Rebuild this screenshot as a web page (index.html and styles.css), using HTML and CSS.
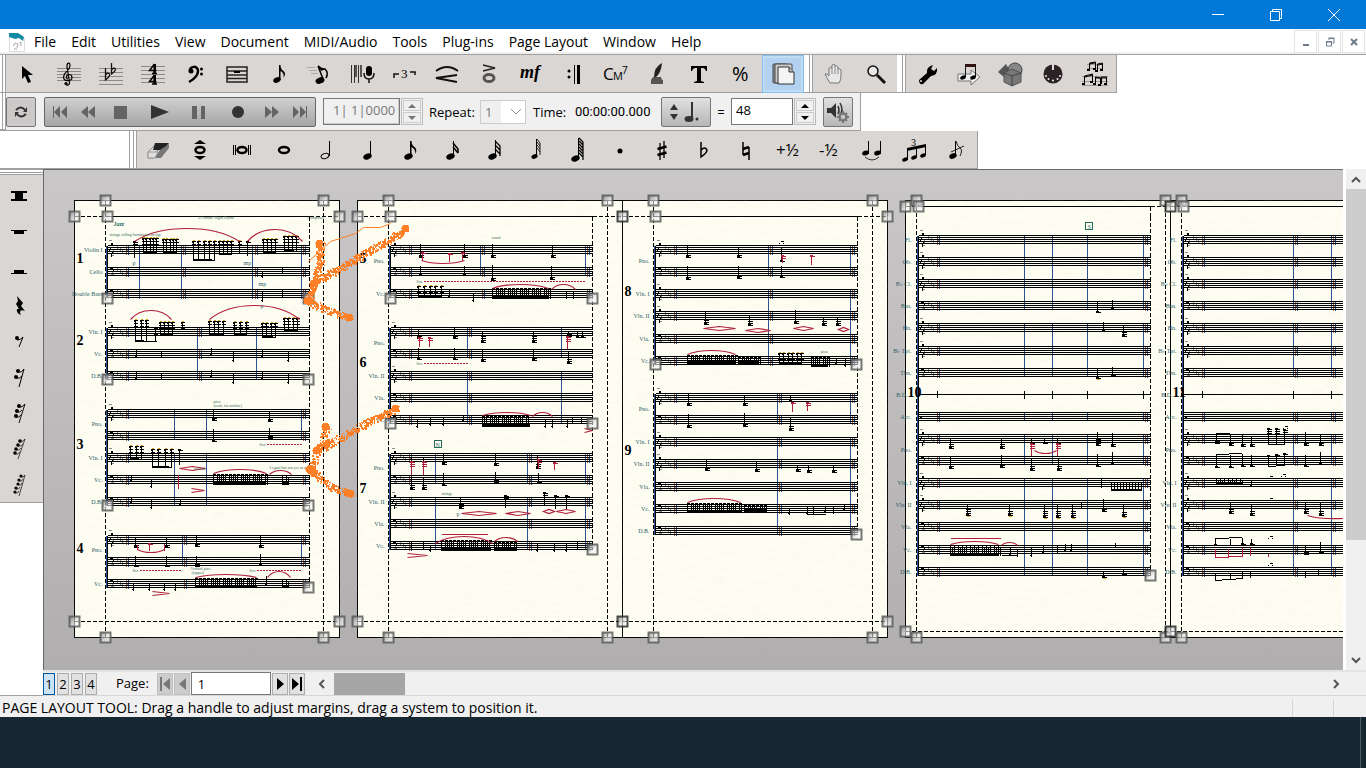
FILE: index.html
```html
<!DOCTYPE html>
<html lang="en">
<head>
  <meta charset="UTF-8">
  <title>Score - Page Layout</title>
  <link rel="stylesheet" href="styles.css">
</head>
<body>

<!-- shared note shapes -->
<svg class="sprite" aria-hidden="true">
  <symbol id="head" viewBox="0 0 8 6"><ellipse cx="4" cy="3" rx="3.9" ry="2.6" transform="rotate(-20 4 3)"/></symbol>
  <symbol id="treble" viewBox="0 0 12 24"><path fill="none" stroke="currentColor" stroke-width="1.200" d="M3.500 21C3 24 8 24 7.500 20L5 5C4.500 0 8.500 0 8 4C7.500 9 1.500 10 1.500 15C1.500 20 10 19.500 10 15.500C10 11.500 4 11.500 4.500 15.500Q5 17 6 17"/><circle cx="4" cy="21.500" r="1.600"/></symbol>
  <symbol id="staff" viewBox="0 0 24 13"><path stroke="#8d8b89" d="M0 .5h24M0 3.500h24M0 6.500h24M0 9.500h24M0 12.500h24"/></symbol>
</svg>

<header class="titlebar">
  <button class="win" aria-label="Minimize"><svg width="12" height="12"><path d="M0 5.500h12"/></svg></button>
  <button class="win" aria-label="Restore"><svg width="12" height="12"><path d="M.5 2.500h9v9h-9zM2.500 2.500v-2h9v9h-2"/></svg></button>
  <button class="win" aria-label="Close"><svg width="12" height="12"><path d="M0 0l12 12M12 0L0 12"/></svg></button>
</header>

<nav class="menubar">
  <svg class="doc-icon" width="16" height="20"><path fill="#fff" stroke="#ddd" d="M.5 2.500h11l4 4v13H.5z"/><path fill="#158ba6" d="M0 1h9l6 4-1 4-4-3-4 1-6-2z"/><path stroke="#aaa" fill="none" d="M4 14l2-3 3 1-1 4M10 11l2-1v4M5 17h3"/></svg>
  <button>File</button><button>Edit</button><button>Utilities</button><button>View</button><button>Document</button><button>MIDI/Audio</button><button>Tools</button><button>Plug-ins</button><button>Page Layout</button><button>Window</button><button>Help</button>
  <div class="mdi">
    <button aria-label="Minimize document"><svg width="10" height="10"><path d="M2 8h6" stroke-width="2"/></svg></button>
    <button aria-label="Restore document"><svg width="10" height="10"><path d="M1.500 5h5v4h-5zM1 4.500h6M4 3V1.500h5V6H7.500M3.500 1h6"/></svg></button>
    <button aria-label="Close document"><svg width="10" height="10"><path d="M2 2l6 6M8 2l-6 6" stroke-width="2"/></svg></button>
  </div>
</nav>

<div class="toolbar main-tools">
  <i class="grip"></i>
  <button aria-label="Selection"><svg viewBox="0 0 30 30"><path d="M10 7v13l3-3 3 7 3-1-3-7h5z"/></svg></button>
  <button aria-label="Staff"><svg viewBox="0 0 30 30"><use href="#staff" x="3" y="9" width="24" height="13"/><use href="#treble" x="8" y="3" width="12" height="24"/></svg></button>
  <button aria-label="Key signature"><svg viewBox="0 0 30 30"><path stroke="#8d8b89" d="M3 9.500h24M3 13.500h24M3 17.500h24M3 21.500h24M3 25.500h24"/><path fill="none" stroke="#111" stroke-width="1.300" d="M9.500 9v12q5-4 4-6-2-2-4 1M15.500 4v11q4-3 4-5-2-2-4 1"/></svg></button>
  <button aria-label="Time signature"><svg viewBox="0 0 30 30"><path stroke="#8d8b89" d="M3 7.500h24M3 11.500h24M3 15.500h24M3 19.500h24M3 23.500h24"/><path fill="none" stroke="#000" stroke-width="1.500" d="M16.500 5v9M16.500 5l-5 6.500h7M14 14.500h5M16.500 16v9M16.500 16l-5 6.500h7M14 25h5"/><path d="M15.500 5h2.500v9h-2.500zM15.500 16h2.500v9h-2.500z"/></svg></button>
  <button aria-label="Clef"><svg viewBox="0 0 30 30"><path fill="none" stroke="#000" stroke-width="2.500" d="M10 12C9 7 18 6 18 12q0 6-9 11"/><circle cx="11" cy="12" r="2.500"/><circle cx="21.500" cy="10" r="1.500"/><circle cx="21.500" cy="15" r="1.500"/></svg></button>
  <button aria-label="Measure"><svg viewBox="0 0 30 30"><path fill="none" stroke="#222" stroke-width="1.500" d="M5 8h20v15H5zM5 12h20M5 16h20M5 19.500h20"/><path d="M12 12h6v2h-6z"/></svg></button>
  <button aria-label="Simple entry"><svg viewBox="0 0 30 30"><use href="#head" x="9" y="18" width="8" height="6"/><path d="M15 6h1.500q0 4 3 6t0 7q1-5-3-7v9H15z"/></svg></button>
  <button aria-label="Speedy entry"><svg viewBox="0 0 30 30"><path stroke="#aaa" d="M1 8.500h8M3 11.500h8M5 14.500h7"/><use href="#head" x="9" y="18" width="10" height="7"/><path fill="none" stroke="#000" stroke-width="1.500" d="M12 7l5 13M12 7q3 3 7 3 4 4 1 9"/><path d="M12 6q3 4 8 4l-5 2z"/></svg></button>
  <button aria-label="HyperScribe"><svg viewBox="0 0 30 30"><path stroke="#333" d="M3.500 6v18M6.500 6v18M10.500 6v18" /><path stroke="#555" stroke-width="2" d="M8 6v12M13 6v12"/><rect x="18" y="7" width="6" height="10" rx="3"/><path fill="none" stroke="#111" stroke-width="1.500" d="M16 14q0 6 5 6t5-6M21 20v4"/></svg></button>
  <button aria-label="Tuplet"><svg viewBox="0 0 30 30"><path fill="none" stroke="#111" stroke-width="1.500" d="M4 19v-4h5M20 13h5v3"/><text x="11" y="19" class="ic-serif" font-size="13">3</text></svg></button>
  <button aria-label="Smart shape"><svg viewBox="0 0 30 30"><path fill="none" stroke="#111" stroke-width="1.800" d="M4 12q11-8 22 0M25 16L4 19l21 4"/></svg></button>
  <button aria-label="Articulation"><svg viewBox="0 0 30 30"><path fill="none" stroke="#222" stroke-width="1.500" d="M9 6l12 3-12 3"/><ellipse cx="15" cy="19" rx="5" ry="3.500" fill="none" stroke="#555" stroke-width="3"/></svg></button>
  <button aria-label="Expression"><svg viewBox="0 0 30 30"><text x="4" y="19" class="ic-serif ic-bi" font-size="18">mf</text></svg></button>
  <button aria-label="Repeat"><svg viewBox="0 0 30 30"><path d="M16 6h1v19h-1zM19 6h3v19h-3z"/><circle cx="11" cy="12" r="1.500"/><circle cx="11" cy="18" r="1.500"/></svg></button>
  <button aria-label="Chord"><svg viewBox="0 0 30 30"><text x="3" y="21" class="ic-sans" font-size="17">C</text><text x="13" y="21" class="ic-sans" font-size="11">M</text><text x="22" y="15" class="ic-sans" font-size="10">7</text></svg></button>
  <button aria-label="Lyrics"><svg viewBox="0 0 30 30"><path d="M20 4q-8 4-8 14h2q5-4 6-14z" fill="#222"/><path fill="#555" d="M11 18h8l1 3h1v4H9v-4z"/></svg></button>
  <button aria-label="Text"><svg viewBox="0 0 30 30"><path d="M7 7h16v5h-1q-1-3-3-3h-2v13l3 1v1H10v-1l3-1V9h-2q-2 0-3 3H7z"/></svg></button>
  <button aria-label="Resize"><svg viewBox="0 0 30 30"><text x="6" y="22" class="ic-sans" font-size="20">%</text></svg></button>
  <button class="selected" aria-label="Page layout"><svg viewBox="0 0 30 30"><rect x="5" y="5" width="14" height="19" rx="1" fill="#999" stroke="#444"/><rect x="7" y="5" width="17" height="19" rx="1" fill="#ccc" stroke="#444"/><path d="M10 8h11l5 5v12H10z" fill="#f4f4f4" stroke="#333"/><path d="M21 8v5h5" fill="#bbb" stroke="#333"/></svg></button>
  <i class="grip wide"></i>
  <button aria-label="Hand grabber"><svg viewBox="0 0 30 30"><path fill="#e8e8e8" stroke="#777" d="M11 24q-3-5-5-9 2-1 4 2V9q2-1 3 0V6q2-1 3 0v1q2-1 3 1v2q2-1 3 1v6q0 4-2 7z"/><path stroke="#888" d="M13 9v6M16 7v8M19 9v6"/></svg></button>
  <button aria-label="Zoom"><svg viewBox="0 0 30 30"><circle cx="12" cy="12" r="5" fill="#e6e6e6" stroke="#111" stroke-width="1.500"/><path stroke="#111" stroke-width="3" d="M16 16l8 8"/></svg></button>
  <i class="grip wide"></i>
  <button aria-label="Special tools"><svg viewBox="0 0 30 30"><path d="M7 21l8-7q-1-6 6-8l-2 4 3 2 3-3q1 7-6 8l-8 8q-4 1-4-4z"/><circle cx="9" cy="22" r="1" fill="#ddd"/></svg></button>
  <button aria-label="Note mover"><svg viewBox="0 0 30 30"><path d="M4 15h13v-4l9 7-9 8v-4H4z" fill="#eee" stroke="#777"/><path d="M11 5h11v3H11z" fill="#311"/><path stroke="#111" d="M11.500 6v12M21.500 6v12"/><use href="#head" x="6" y="16" width="6" height="5"/><use href="#head" x="16" y="16" width="6" height="5"/></svg></button>
  <button aria-label="Graphics"><svg viewBox="0 0 30 30"><path d="M2 13l8-8 5 9-6 5z" fill="#555"/><circle cx="19" cy="11" r="7" fill="#888" stroke="#444"/><path d="M16 10l9 4v9l-9 4-8-4v-9z" fill="#777" stroke="#555"/><path d="M8 14l8 3 9-3M16 17v10" stroke="#444" fill="none"/></svg></button>
  <button aria-label="MIDI"><svg viewBox="0 0 30 30"><circle cx="15" cy="15" r="9.500" fill="#2a2224"/><path d="M14 5h2v6h-2z" fill="#ddd"/><g fill="#eee"><circle cx="8" cy="17" r="1"/><circle cx="10.500" cy="20" r="1"/><circle cx="15" cy="21.500" r="1"/><circle cx="19.500" cy="20" r="1"/><circle cx="22" cy="17" r="1"/></g></svg></button>
  <button aria-label="Ossia"><svg viewBox="0 0 30 30"><path stroke="#999" d="M7 5.500h16M7 9.500h16M2 17.500h26M2 22.500h26M2 26.500h26"/><path fill="none" stroke="#000" d="M9.500 11V4l6-1v7M17.500 11V5l5-1v7M4.500 25v-8l8-2v8M15.500 25v-7l5 1v7M21.500 25v-7h5v7M9 5l6-1M18 6l5-1M5 18l8-2M15 19h12"/><path d="M7 10h3v2H7zM13 9h3v2h-3zM15 11h3v2h-3zM20 10h3v2h-3zM2 24h3v2H2zM10 22h3v2h-3zM13 24h3v2h-3zM18 25h3v2h-3zM24 24h3v2h-3z"/></svg></button>
  <i class="edge"></i>
</div>

<div class="toolbar playback">
  <i class="grip"></i>
  <button class="raised square" aria-label="Loop"><svg width="14" height="14"><path fill="none" stroke="#333" stroke-width="2" d="M2 5q5-5 9 0M12 9q-5 5-9 0"/><path fill="#333" d="M13 2v5H9zM1 12V7h4z"/></svg></button>
  <div class="transport">
    <button aria-label="Rewind to start"><svg width="16" height="14"><path d="M1 1h1v12H1zM8 1v12L2 7zM15 1v12L9 7z"/></svg></button>
    <button aria-label="Rewind"><svg width="16" height="14"><path d="M8 1v12L1 7zM15 1v12L8 7z"/></svg></button>
    <button class="mid" aria-label="Stop"><svg width="14" height="14"><path d="M0 1h13v13H0z"/></svg></button>
    <button class="dark wide" aria-label="Play"><svg width="20" height="14"><path d="M1 0l18 7-18 7z"/></svg></button>
    <button class="mid" aria-label="Pause"><svg width="14" height="14"><path d="M0 1h5v13H0zM9 1h4v13H9z"/></svg></button>
    <button class="dark wide" aria-label="Record"><svg width="14" height="14"><circle cx="7" cy="7" r="6"/></svg></button>
    <button aria-label="Fast forward"><svg width="16" height="14"><path d="M1 1l7 6-7 6zM8 1l7 6-7 6z"/></svg></button>
    <button aria-label="Forward to end"><svg width="16" height="14"><path d="M1 1l6 6-6 6zM8 1l6 6-6 6zM14 1h1v12h-1z"/></svg></button>
  </div>
  <div class="spin off">
    <input class="counter" type="text" value="1| 1|0000" aria-label="Position" disabled>
    <span class="spinner"><button aria-label="Position up" disabled><svg width="8" height="4"><path d="M0 4l4-4 4 4z"/></svg></button><button aria-label="Position down" disabled><svg width="8" height="4"><path d="M0 0l4 4 4-4z"/></svg></button></span>
  </div>
  <label class="repeat-label" for="repeat">Repeat:</label>
  <span class="pick"><select id="repeat" disabled><option>1</option></select><svg width="10" height="6"><path fill="none" stroke="#999" d="M0 0l5 5 5-5"/></svg></span>
  <span class="time-label">Time:</span>
  <span class="time">00:00:00.000</span>
  <button class="raised tempo" aria-label="Beat unit"><svg width="34" height="24"><path fill="#333" d="M1 10l4-6 4 6zM1 14l4 6 4-6zM22 2h2v18h-2z"/><g fill="#333"><ellipse cx="20" cy="19" rx="4.500" ry="3"/><circle cx="28" cy="19" r="1.500"/></g></svg></button>
  <label class="equals" for="bpm">=</label>
  <div class="spin">
    <input id="bpm" class="bpm" type="text" value="48">
    <span class="spinner"><button aria-label="Tempo up"><svg width="8" height="4"><path d="M0 4l4-4 4 4z"/></svg></button><button aria-label="Tempo down"><svg width="8" height="4"><path d="M0 0l4 4 4-4z"/></svg></button></span>
  </div>
  <button class="raised square speaker" aria-label="Playback settings"><svg width="24" height="24"><path fill="#333" d="M1 8h4l5-5v15l-5-5H1z"/><path fill="none" stroke="#333" stroke-width="1.500" d="M12 6q2 4 0 8M14 3q4 7 0 12"/><circle cx="17" cy="17" r="3.500" fill="none" stroke="#777" stroke-width="2.500"/><path stroke="#777" stroke-width="2" d="M17 11v2M17 21v2M11 17h2M21 17h2M13 13l1 1M20 20l1 1M21 13l-1 1M14 20l-1 1"/></svg></button>
  <i class="edge"></i>
</div>

<div class="toolbar entry">
  <div class="entry-blank"></div>
  <i class="grip wide"></i>
  <button aria-label="Eraser"><svg viewBox="0 0 30 30"><path fill="#ddd" stroke="#888" d="M5 17l7-7h5l-6 13H5z"/><path fill="#222" d="M12 8h14l-6 7H10z"/><path fill="#777" d="M26 9v4l-8 10h-7l6-8z"/><path fill="#ddd" stroke="#999" d="M5 17h10l-3 6H5z"/></svg></button>
  <button aria-label="Repitch"><svg viewBox="0 0 30 30"><path d="M9 9l6-4 6 4zM9 21l6 4 6-4z"/><ellipse cx="15" cy="15" rx="4.500" ry="3" fill="none" stroke="#000" stroke-width="2.500"/></svg></button>
  <button aria-label="Double whole"><svg viewBox="0 0 30 30"><path d="M6 10h1v10H6zM8 10h1v10H8zM21 10h1v10h-1zM23 10h1v10h-1z"/><ellipse cx="15" cy="15" rx="4.500" ry="3" fill="none" stroke="#000" stroke-width="2.500"/></svg></button>
  <button aria-label="Whole"><svg viewBox="0 0 30 30"><ellipse cx="15" cy="15" rx="5" ry="3" fill="none" stroke="#000" stroke-width="2.500"/></svg></button>
  <button aria-label="Half"><svg viewBox="0 0 30 30"><ellipse cx="14" cy="21" rx="4" ry="2.500" fill="none" stroke="#000" transform="rotate(-20 14 21)"/><path d="M18 6h1v15h-1z"/></svg></button>
  <button aria-label="Quarter"><svg viewBox="0 0 30 30"><use href="#head" x="10" y="18" width="9" height="7"/><path d="M17 6h1v15h-1z"/></svg></button>
  <button aria-label="Eighth"><svg viewBox="0 0 30 30"><use href="#head" x="9" y="18" width="9" height="7"/><path d="M15 6h1.500q0 4 3 6t1 7q0-5-4-7v9H15z"/></svg></button>
  <button aria-label="16th"><svg viewBox="0 0 30 30"><use href="#head" x="9" y="18" width="9" height="7"/><path d="M16 6h1v15h-1z"/><path fill="none" stroke="#000" stroke-width="1.500" d="M16 8l5 6v4M16 12l5 6"/></svg></button>
  <button aria-label="32nd"><svg viewBox="0 0 30 30"><use href="#head" x="9" y="18" width="9" height="7"/><path d="M16 5h1v16h-1z"/><path fill="none" stroke="#000" stroke-width="1.300" d="M16 6l5 5v10M16 10l5 5M16 14l5 5"/></svg></button>
  <button aria-label="64th"><svg viewBox="0 0 30 30"><use href="#head" x="10" y="19" width="7" height="5"/><path d="M15 4h1v17h-1z"/><path fill="none" stroke="#222" d="M16 4l3 4v12M16 7l3 4M16 10l3 4M16 13l3 4"/></svg></button>
  <button aria-label="128th"><svg viewBox="0 0 30 30"><use href="#head" x="8" y="20" width="9" height="7"/><path d="M15 3h1v20h-1z"/><path fill="none" stroke="#000" stroke-width="1.200" d="M16 3l4 4v18M16 6l4 4M16 9l4 4M16 12l4 4M16 15l4 4M16 18l4 4"/></svg></button>
  <button aria-label="Dot"><svg viewBox="0 0 30 30"><circle cx="15" cy="16" r="2.500"/></svg></button>
  <button aria-label="Sharp"><svg viewBox="0 0 30 30"><path stroke="#000" stroke-width="1.300" d="M13 8v17M17 6v17"/><path stroke="#000" stroke-width="2.500" d="M10.500 14l9-2.500M10.500 20l9-2.500"/></svg></button>
  <button aria-label="Flat"><svg viewBox="0 0 30 30"><path fill="none" stroke="#000" stroke-width="1.500" d="M12 7v15q6-4 6-7-2-4-6 0"/></svg></button>
  <button aria-label="Natural"><svg viewBox="0 0 30 30"><path fill="none" stroke="#000" stroke-width="1.500" d="M12 7v13M18 12v13"/><path stroke="#000" stroke-width="2.500" d="M12 14l6-2M12 20l6-2"/></svg></button>
  <button aria-label="Half step up"><svg viewBox="0 0 30 30"><text x="3" y="21" class="ic-sans" font-size="17">+½</text></svg></button>
  <button aria-label="Half step down"><svg viewBox="0 0 30 30"><text x="4" y="21" class="ic-sans" font-size="17">-½</text></svg></button>
  <button aria-label="Tie"><svg viewBox="0 0 30 30"><path d="M11 6h1v13h-1zM23 6h1v13h-1z"/><use href="#head" x="5" y="15" width="7" height="6"/><use href="#head" x="17" y="15" width="7" height="6"/><path fill="none" stroke="#333" d="M8 22q7 6 14 0"/></svg></button>
  <button aria-label="Tuplet entry"><svg viewBox="0 0 30 30"><path d="M8 13l19-4v3L8 16z"/><path stroke="#000" d="M8.500 13v12M17.500 12v10M26.500 10v10"/><use href="#head" x="3" y="22" width="6" height="5"/><use href="#head" x="12" y="20" width="6" height="5"/><use href="#head" x="21" y="18" width="6" height="5"/><text x="12" y="11" class="ic-serif" font-size="10">3</text></svg></button>
  <button aria-label="Grace note"><svg viewBox="0 0 30 30"><use href="#head" x="8" y="18" width="8" height="6"/><path d="M14 6h1v15h-1z"/><path fill="none" stroke="#222" d="M15 6q1 5 4 7t0 8M10 17l13-6"/></svg></button>
  <i class="edge"></i>
</div>

<main class="work">
  <aside class="rests">
    <i class="grip-h"></i>
    <div class="rest-list">
      <button aria-label="Double whole rest"><svg viewBox="0 0 30 30"><path d="M7 9h16v2H7zM7 17h16v2H7zM11 10h8v8h-8z"/></svg></button>
      <button aria-label="Whole rest"><svg viewBox="0 0 30 30"><path d="M7 12h16v1H7zM10 12h10v4H10z"/></svg></button>
      <button aria-label="Half rest"><svg viewBox="0 0 30 30"><path d="M7 19h16v1H7zM10 16h10v4H10z"/></svg></button>
      <button aria-label="Quarter rest"><svg viewBox="0 0 30 30"><path d="M13 6l6 7-2 3 4 5q-5-2-5 2l1 2q-5-2-4-6h2l-3-5 2-3z"/></svg></button>
      <button aria-label="Eighth rest"><svg viewBox="0 0 30 30"><circle cx="13" cy="12" r="2"/><path fill="none" stroke="#000" d="M13 14q4 0 6-3l-4 10"/></svg></button>
      <button aria-label="16th rest"><svg viewBox="0 0 30 30"><circle cx="14" cy="9" r="2"/><circle cx="12" cy="15" r="2"/><path fill="none" stroke="#000" d="M14 10q4 1 6-3l-5 18M12 16q4 1 6-2"/></svg></button>
      <button aria-label="32nd rest"><svg viewBox="0 0 30 30"><circle cx="15" cy="8" r="2"/><circle cx="13" cy="13" r="2"/><circle cx="12" cy="18" r="2"/><path fill="none" stroke="#111" d="M15 9q3 1 6-3l-6 19M13 14q3 1 5-2M12 19q3 1 5-2"/></svg></button>
      <button aria-label="64th rest"><svg viewBox="0 0 30 30"><circle cx="16" cy="7" r="1.800"/><circle cx="14" cy="11" r="1.800"/><circle cx="12" cy="15" r="1.800"/><circle cx="11" cy="19" r="1.800"/><path fill="none" stroke="#222" stroke-width=".8" d="M15 8q3 1 6-3l-7 20M14 12q3 1 5-2M12 16q3 1 5-2M11 20q3 1 5-2"/></svg></button>
      <button aria-label="128th rest"><svg viewBox="0 0 30 30"><circle cx="17" cy="6" r="1.600"/><circle cx="15" cy="10" r="1.600"/><circle cx="14" cy="14" r="1.600"/><circle cx="12" cy="18" r="1.600"/><circle cx="11" cy="22" r="1.600"/><path fill="none" stroke="#222" stroke-width=".8" d="M17 7q2 1 4-2l-6 21M15 11q3 1 4-2M14 15q3 1 4-2M12 19q3 1 4-2M11 23q3 1 4-2"/></svg></button>
    </div>
  </aside>

  <section class="document">
    <div class="view">
      <div class="canvas" id="canvas"></div>
      <div class="vscroll">
        <button aria-label="Scroll up"><svg width="10" height="7"><path d="M1 6l4-4 4 4"/></svg></button>
        <span class="vthumb"></span>
        <button class="last" aria-label="Scroll down"><svg width="10" height="7"><path d="M1 1l4 4 4-4"/></svg></button>
      </div>
    </div>
    <div class="bottom">
      <button class="layer on">1</button><button class="layer">2</button><button class="layer">3</button><button class="layer">4</button>
      <label for="page">Page:</label>
      <button class="nav off" aria-label="First page"><svg width="12" height="14"><path d="M1 0h2v14H1zM11 1v12L4 7z"/></svg></button>
      <button class="nav off" aria-label="Previous page"><svg width="12" height="14"><path d="M10 1v12L3 7z"/></svg></button>
      <input id="page" type="text" value="1">
      <button class="nav" aria-label="Next page"><svg width="12" height="14"><path d="M3 1v12l7-6z"/></svg></button>
      <button class="nav" aria-label="Last page"><svg width="12" height="14"><path d="M1 1v12l7-6zM9 0h2v14H9z"/></svg></button>
      <div class="hscroll">
        <button aria-label="Scroll left"><svg width="7" height="10"><path d="M6 1L2 5l4 4"/></svg></button>
        <span class="hthumb"></span>
        <button class="last" aria-label="Scroll right"><svg width="7" height="10"><path d="M1 1l4 4-4 4"/></svg></button>
      </div>
    </div>
  </section>
</main>

<footer class="status"><span>PAGE LAYOUT TOOL: Drag a handle to adjust margins, drag a system to position it.</span><i></i><i></i></footer>
<div class="taskbar"></div>

<script src="score.js"></script>
</body>
</html>
```

FILE: styles.css
```css
* {
  box-sizing: border-box;
}
body {
  margin: 0;
  height: 100vh;
  display: flex;
  flex-direction: column;
  overflow: hidden;
  background: #fff;
  color: #000;
  font: 14px/20px "Open Sans", "Noto Sans", sans-serif;
}
button, input, select {
  font: inherit;
  color: inherit;
  margin: 0;
  padding: 0;
  border: 0;
  border-radius: 0;
  background: none;
}
button {
  display: flex;
  align-items: center;
  justify-content: center;
}
.sprite {
  position: absolute;
  width: 0;
  height: 0;
}

/* window frame */
.titlebar {
  flex: none;
  height: 29px;
  display: flex;
  justify-content: flex-end;
  padding-right: 3px;
  background: #0078d7;
}
.win {
  width: 58px;
}
.win svg {
  fill: none;
  stroke: #fff;
}
.menubar {
  flex: none;
  height: 26px;
  display: flex;
  align-items: center;
  gap: 15px;
  padding-left: 9px;
  border-bottom: 1px solid #a0a0a0;
  box-shadow: inset 0 -2px #f0f0f0;
}
.doc-icon {
  margin-right: -6px;
}
.mdi {
  display: flex;
  gap: 1px;
  margin-left: auto;
  padding-right: 1px;
  align-self: flex-start;
  padding-top: 1px;
}
.mdi button {
  width: 23px;
  height: 23px;
  border: 1px solid #e3e3e3;
}
.mdi svg {
  fill: none;
  stroke: #6d7b8a;
}

/* toolbars */
.toolbar {
  flex: none;
  height: 38px;
  display: flex;
  align-items: stretch;
}
.grip {
  width: 6px;
  flex: none;
  background: #fff;
  border-right: 1px solid #a0a0a0;
  box-shadow: inset -2px 0 #fff, inset -3px 0 #a0a0a0;
}
.grip.wide {
  width: 9px;
}
.edge {
  width: 1px;
  background: #a0a0a0;
}
.main-tools > button, .entry > button {
  width: 42px;
  flex: none;
  background: #d9d6d3;
}
.main-tools > *, .entry > *, .playback > .grip {
  border-bottom: 1px solid #a0a0a0;
}
.main-tools svg, .entry svg {
  width: 30px;
  height: 30px;
}
.main-tools > .selected {
  background: #b3d2f2;
  border: 1px solid #84c1f0;
  box-shadow: inset 0 0 0 2px #c0dcf3;
}
.ic-serif {
  font-family: "Liberation Serif", serif;
}
.ic-bi {
  font-weight: bold;
  font-style: italic;
}
.ic-sans {
  font-family: "Open Sans", sans-serif;
}

.playback {
  align-self: flex-start;
  align-items: center;
  background: #f0f0f0;
  border-bottom: 1px solid #a0a0a0;
  font-size: 13px;
}
.playback .grip, .playback .edge {
  align-self: stretch;
}
.raised {
  height: 30px;
  border: 1px solid #777;
  border-radius: 2px;
  background: linear-gradient(#e0e0e0, #b6b6b6);
}
.square {
  width: 30px;
  background: #ccc9c8;
}
.transport {
  display: flex;
  justify-content: center;
  width: 272px;
  height: 30px;
  margin: 0 7px 0 8px;
  border: 1px solid #666;
  border-radius: 2px;
  background: linear-gradient(#cfcfcf, #a5a5a5);
}
.transport button {
  width: 28px;
}
.transport .mid {
  width: 38px;
}
.transport .wide {
  width: 40px;
}
.transport svg {
  fill: #646464;
}
.transport .dark svg {
  fill: #333;
}
.spin {
  display: flex;
  height: 27px;
  gap: 1px;
}
.spin input {
  border: 1px solid #777;
  background: #fff;
  padding: 0 4px 3px;
}
.spin .counter {
  width: 77px;
  background: #f0f0f0;
  padding-left: 9px;
  color: #777;
  box-shadow: inset -1px -1px #ccc;
}
.spin .bpm {
  width: 62px;
}
.spinner {
  display: flex;
  flex-direction: column;
  width: 22px;
  padding: 1px;
  gap: 1px;
  border: 1px solid #bbb;
}
.spinner button {
  flex: 1;
  border: 1px solid #ccc;
}
.off .spinner svg {
  fill: #777;
}
.repeat-label {
  margin-left: 6px;
  width: 51px;
}
.pick {
  position: relative;
  display: flex;
}
.pick select {
  appearance: none;
  width: 46px;
  height: 24px;
  padding-left: 4px;
  border: 1px solid #ccc;
  background: linear-gradient(90deg, #f0f0f0 20px, #fff 20px);
  color: #777;
  opacity: 1;
}
.pick svg {
  position: absolute;
  right: 5px;
  top: 9px;
}
.time-label {
  width: 42px;
  margin-left: 7px;
}
.time {
  width: 78px;
  font-family: Roboto, sans-serif;
}
.tempo {
  width: 50px;
  margin-left: 8px;
}
.equals {
  width: 20px;
  text-align: center;
}
.speaker {
  margin: 0 7px;
  background: linear-gradient(#e0e0e0, #b6b6b6);
}
.entry-blank {
  width: 130px;
  background: #fff;
  border-right: 1px solid #a0a0a0;
}
.entry .grip.wide {
  width: 7px;
}

/* score window */
.work {
  flex: 1;
  min-height: 0;
  display: flex;
}
.rests {
  width: 43px;
  flex: none;
  border-bottom: 1px solid #a0a0a0;
}
.grip-h {
  display: block;
  height: 6px;
  border-top: 1px solid #a0a0a0;
  border-bottom: 1px solid #a0a0a0;
  box-shadow: inset 0 2px #fff, inset 0 3px #a0a0a0;
}
.rest-list {
  display: flex;
  flex-direction: column;
  align-items: center;
  gap: 1px;
  padding: 4px 5px 0 0;
  background: #d9d6d3;
  border-bottom: 1px solid #a0a0a0;
}
.rest-list button {
  height: 35px;
}
.rest-list svg {
  width: 30px;
  height: 30px;
}
.document {
  flex: 1;
  min-width: 0;
  display: flex;
  flex-direction: column;
  background: #f0f0f0;
}
.view {
  flex: 1;
  min-height: 0;
  display: flex;
}
.canvas {
  flex: 1;
  min-width: 0;
  overflow: hidden;
  border-top: 1px solid #696969;
  border-left: 1px solid #696969;
  background: linear-gradient(#c9c7c8, #b0aeaf);
}
.canvas svg {
  display: block;
}
.vscroll, .hscroll {
  display: flex;
  background: #f0f0f0;
}
.vscroll {
  flex-direction: column;
  width: 23px;
  border-left: 3px solid #fff;
}
.vscroll button {
  height: 20px;
}
.vscroll .last, .hscroll .last {
  margin-top: auto;
}
.vscroll svg, .hscroll svg {
  fill: none;
  stroke: #555;
  stroke-width: 2px;
}
.vthumb {
  height: 70%;
  background: #cdcdcd;
}
.bottom {
  flex: none;
  height: 26px;
  display: flex;
  align-items: center;
  border-top: 2px solid #e3e3e3;
  border-bottom: 1px solid #d7d7d7;
  font-size: 13px;
}
.layer {
  width: 12px;
  height: 22px;
  margin-right: 2px;
  background: #e1e1e1;
  border: 1px solid #adadad;
}
.layer.on {
  background: #cce4f7;
  border-color: #005499;
}
.bottom label {
  margin: 0 8px 2px 17px;
}
.nav {
  width: 16px;
  height: 22px;
  margin-right: 1px;
  background: #e1e1e1;
  border: 1px solid #adadad;
}
.nav.off {
  background: #ccc;
  border-color: #bfbfbf;
}
.nav.off svg {
  fill: #777;
}
.bottom input {
  width: 80px;
  height: 23px;
  margin-right: 1px;
  padding-left: 6px;
  background: #fff;
  border: 1px solid #777;
}
.hscroll {
  flex: 1;
  height: 22px;
  margin: 0 18px 0 4px;
}
.hscroll button {
  width: 24px;
}
.hscroll .last {
  margin: 0 0 0 auto;
}
.hthumb {
  width: 71px;
  background: #a6a6a6;
}
.status {
  flex: none;
  height: 21px;
  display: flex;
  padding: 3px 0 0 2px;
  line-height: 18px;
  background: #f0f0f0;
}
.status span {
  flex: 1;
}
.status i {
  width: 41px;
  border-left: 1px solid #d7d7d7;
}
.status i:last-child {
  width: 33px;
}
.taskbar {
  flex: none;
  height: 51px;
  background: #172832;
  border-right: 1px solid #101c24;
  box-shadow: inset -4px 0 #172832, inset -5px 0 #4b5a63;
}

/* score drawing */
.paper {
  fill: #fefef3;
  stroke: #000;
}
.grain {
  opacity: .12;
}
.crisp {
  shape-rendering: crispEdges;
  fill: none;
}
.ink { stroke: #000; }
.bar { stroke: #2b5590; }
.red { stroke: #b01f3c; }
.soft { stroke: #8b8d88; }
.gold { stroke: #d9a41c; }
.rust { stroke: #a5614f; }
.teal { stroke: #27695a; }
.margin {
  stroke: #000;
  stroke-dasharray: 4 2;
}
.slur {
  fill: none;
  stroke: #b01f3c;
  stroke-width: 1.2;
}
.handle {
  stroke: #555;
  stroke-opacity: .8;
  stroke-width: 2px;
}
.handle.dark {
  stroke: #222;
}
.tiny {
  font: 6px "Liberation Serif", serif;
  fill: #2f5f68;
}
.micro {
  font: 4px "Liberation Serif", serif;
  fill: #3d6a5c;
}
.title {
  font: italic bold 6px "Liberation Serif", serif;
  fill: #1b6a60;
}
.number {
  font: bold 14px "Liberation Serif", serif;
}
.marker {
  fill: #ff7f27;
  shape-rendering: crispEdges;
}
.marker-line {
  fill: none;
  stroke: #ff7f27;
}
```

FILE: score.js
```js
const layers = { soft: '', bar: '', gold: '', rust: '', ink: '', red: '', teal: '' };
let margins = '', slurs = '', texts = '', handles = '', pages = '';

let seed = 7;
function rnd() {
  seed = (seed * 16807) % 2147483647;
  return seed / 2147483647;
}

const h = (l, x, y, x2) => { layers[l] += `M${x} ${y}H${x2}`; };
const v = (l, x, y, y2) => { layers[l] += `M${x} ${y}V${y2}`; };
const dash = (x, y, x2, y2) => { margins += `M${x} ${y}L${x2} ${y2}`; };

function text(x, y, str, cls = 'tiny', anchor = 'start') {
  texts += `<text x="${x}" y="${y}" class="${cls}" text-anchor="${anchor}">${str}</text>`;
}

function page(x1, x2, m1, m2, s1, s2, top, bottom) {
  pages += `<rect class="paper" x="${x1}" y="200" width="${x2 - x1}" height="437"/>
    <rect class="grain" x="${x1}" y="200" width="${x2 - x1}" height="437" filter="url(#grain)"/>`;
  dash(m1, 200, m1, 637);
  dash(m2, 200, m2, 637);
  dash(x1, top, s1, top);
  dash(s2, top, x2, top);
  dash(x1, bottom, x2, bottom);
  h('ink', s1, top, s2);
}

function handle(x, y, dark) {
  handles += `<rect class="handle${dark ? ' dark' : ''}" x="${x - 5}" y="${y - 5}" width="10" height="10" fill="url(#knob)"/>`;
}

// clef: t treble, b bass, p percussion
function staff(x, x2, y, clef, times = []) {
  for (let i = 0; i < 5; i++) h('ink', x, y + i * 2, x2);
  if (clef === 't') {
    layers.ink += `M${x + 4} ${y - 3}v3M${x + 5} ${y - 3}v2M${x + 3} ${y + 1}v2M${x + 2} ${y + 3}v3M${x + 5} ${y + 5}v2M${x + 4} ${y + 8}v3`;
    layers.soft += `M${x + 1} ${y - 5}h3M${x + 3} ${y + 10}h3M${x + 6} ${y + 3}v4`;
  } else if (clef === 'b') {
    layers.ink += `M${x + 2} ${y + 1}h3M${x + 6} ${y + 1}v3`;
    layers.soft += `M${x + 3} ${y + 7}h3M${x + 5} ${y + 4}v3`;
  } else {
    layers.ink += `M${x + 2} ${y + 3}v3M${x + 3} ${y + 3}v3`;
  }
  if (clef !== 'p') {
    v('soft', x + 10, y - 1, y + 4);
    v('soft', x + 13, y + 2, y + 5);
    v('soft', x + 15, y + 3, y + 7);
  }
  [x + 19].concat(times).forEach(t => {
    v('rust', t, y, y + 9);
    v('bar', t + 2, y, y + 9);
    v('soft', t + 1, y + 3, y + 6);
  });
}

// stem with n heads at the bottom (or at the top when n is negative)
function chord(x, y1, y2, n = 2, l = 'ink') {
  v(l, x, y1, y2);
  for (let i = 0; i < Math.abs(n); i++) {
    const y = n > 0 ? y2 - i * 2 : y1 + i * 2;
    h(l, x - 2, y, x + 3);
    if (i === 0) h(l, x - 2, y - 1, x + 1);
  }
}

// beamed notes, heads on ledger lines above the beam
function group(x1, x2, n, top, beam) {
  for (let i = 0; i < n; i++) {
    const x = n > 1 ? Math.round(x1 + (x2 - x1) * i / (n - 1)) : x1;
    v('ink', x, top, beam);
    for (let k = 0; k < 3; k++) h('ink', x - 2, top + k * 3, x + 2);
    h('ink', x - 2, top + 1, x);
    h('gold', x - 1, top - 1, x + 1);
  }
  if (n > 1) {
    h('ink', x1, beam, x2);
    h('ink', x1, beam - 1, x2 - 3);
  }
}

// fast repeated notes
function run(x1, x2, top, beam) {
  for (let x = x1; x <= x2; x += 4) {
    v('ink', x, top, beam);
    if (x % 3) v('ink', x + 2, top + 1, beam);
    h('ink', x - 1, top, x + 2);
  }
  for (let i = 0; i < 3; i++) h('ink', x1, beam - i, x2);
}

function slur(x1, x2, y, peak) {
  const c = y + (peak - y) * 4 / 3;
  const q = (x2 - x1) / 4;
  slurs += `M${x1} ${y}C${x1 + q} ${c} ${x2 - q} ${c} ${x2} ${y}`;
}

function hairpin(x1, x2, y, type) {
  const m = (x1 + x2) / 2;
  if (type === '<>') slurs += `M${x1} ${y}L${m} ${y - 2}L${x2} ${y}L${m} ${y + 2}Z`;
  else slurs += `M${x1} ${y - 2}L${x2} ${y}L${x1} ${y + 2}`;
}

function dots(x1, x2, y) {
  text(x1 - 7, y + 1, '8va', 'micro');
  for (let x = x1; x < x2; x += 3) h('red', x, y, x + 2);
}

const stems = list => list.forEach(([x, a, b]) => { v('ink', x, a, b); h('ink', x - 2, b - 1, x); });
const chords = list => list.forEach(c => chord(...c));

function bars(xs, y1, y2) {
  xs.forEach(x => v('bar', x, y1, y2));
}

function system(x, x2, labelX, rows, times) {
  rows.forEach(([y, clef, name, dy = 6]) => {
    staff(x, x2, y, clef, times);
    if (name) text(labelX, y + dy, name, 'tiny', 'end');
  });
  const last = rows[rows.length - 1][0] + 8;
  v('ink', x, rows[0][0], last);
  v('bar', x - 1, rows[0][0], last);
  dash(x2, 216, x2, last);
}

/* pages */
page(74, 339, 105, 323, 107, 309, 216, 621);
page(357, 622, 388, 607, 390, 592, 216, 621);
page(622, 887, 653, 872, 655, 857, 216, 621);
page(905, 1170, 916, 1165, 918, 1150, 206, 631);
page(1170, 1435, 1181, 1430, 1183, 1415, 206, 631);

/* page 1 */
text(197, 218, 'A Formal Night Hymn', 'micro');
text(307, 218, 'Composer', 'micro');
text(113, 225, 'Jazz', 'title');
text(109, 235, 'strings rolling harmonics on top', 'micro');
system(107, 309, 102, [[245, 't', 'Violin I'], [267, 'b', 'Cello'], [289, 'b', 'Double Bass']], [183, 255, 303]);
bars([139, 181, 252, 301], 245, 298);
chord(134, 242, 257, -2);
group(143, 156, 5, 238, 252);
group(163, 176, 5, 239, 252);
group(193, 214, 5, 241, 260);
group(219, 231, 4, 241, 254);
group(239, 239, 1, 241, 253);
chord(247, 242, 255, -1);
group(263, 275, 4, 239, 252);
group(284, 296, 4, 236, 251);
slur(134, 239, 241, 228);
slur(247, 302, 241, 229);
text(132, 264, 'p'); text(243, 264, 'mp'); text(258, 285, 'mp'); text(260, 307, 'p');
stems([[262, 270, 277], [282, 267, 272], [262, 291, 301], [282, 288, 296]]);

system(107, 309, 102, [[327, 't', 'Vln. I'], [349, 'b', 'Vc.'], [371, 'b', 'D.B.']], [199]);
bars([197, 256], 327, 379);
group(135, 146, 3, 320, 341);
group(155, 155, 1, 328, 341);
h('ink', 144, 341, 156);
group(160, 172, 4, 322, 334);
group(182, 182, 1, 322, 329);
group(209, 223, 4, 321, 334);
group(234, 246, 3, 322, 334);
group(262, 275, 4, 323, 337);
group(284, 297, 4, 318, 330);
slur(130, 171, 319, 310);
slur(209, 299, 319, 305);
[0, 22].forEach(d => stems([[136, 348 + d, 357 + d], [161, 350 + d, 356 + d], [211, 347 + d, 355 + d], [233, 351 + d, 361 + d], [262, 349 + d, 357 + d], [288, 351 + d, 361 + d]]));

text(213, 402, 'pizz.', 'micro'); text(213, 406, '(scale for tonline)', 'micro');
system(107, 309, 102, [[409, 't', 'Pno.', 16], [431, 'b', ''], [453, 't', 'Vln. I'], [475, 'b', 'Vc.'], [497, 'b', 'D.B.']], [303]);
bars([174, 206], 409, 439);
bars([174, 206], 453, 505);
bars([301], 409, 439);
chords([[213, 408, 420], [269, 410, 421, 3], [213, 428, 441, 3], [269, 427, 438]]);
dots(266, 300, 444);
group(130, 141, 3, 446, 459);
group(152, 171, 4, 449, 467);
chord(179, 450, 464, -1);
hairpin(179, 205, 468, '<>');
hairpin(191, 204, 490, '>');
chord(178, 474, 488, 0, 'red');
text(193, 469, 'ordinals', 'micro'); text(269, 468, 'Legato but not yet so much', 'micro');
run(213, 265, 474, 484);
run(282, 288, 475, 484);
slur(213, 266, 473, 469);
slur(269, 291, 474, 470);
stems([[131, 474, 481], [151, 478, 487], [131, 496, 503], [151, 499, 508], [180, 498, 505]]);

system(107, 309, 102, [[535, 't', 'Pno.', 16], [557, 'b', ''], [579, 'b', 'Vc.']], [184, 303]);
bars([182, 301], 535, 565);
chords([[135, 536, 547], [166, 536, 547], [196, 534, 546], [260, 534, 547, 3], [135, 555, 566, 1], [166, 555, 566, 1], [196, 555, 566], [260, 553, 565]]);
chord(137, 544, 549, 0, 'red'); chord(149, 544, 550, -1, 'red'); chord(164, 543, 550, 0, 'red');
slur(137, 164, 549, 552);
dots(139, 180, 570); dots(256, 301, 570);
text(190, 569, 'Ordinal pizz.', 'micro'); text(191, 573, '(tappet)', 'micro');
run(195, 256, 578, 587);
run(282, 288, 579, 587);
slur(195, 256, 577, 574);
slur(267, 290, 577, 571);
stems([[133, 582, 590], [149, 582, 590], [164, 582, 590], [175, 582, 590], [266, 575, 585]]);
hairpin(152, 169, 593, '>');

/* page 2 */
text(491, 238, 'comb', 'micro');
system(390, 592, 384, [[245, 't', 'Pno.', 17], [267, 'b', ''], [289, 'b', 'Vc.']], [482, 587]);
bars([480, 585], 245, 275);
chords([[420, 243, 257, 3], [464, 243, 257, 3], [492, 243, 257, 3], [552, 244, 257, 3], [420, 265, 275, 1], [464, 265, 275, 1], [492, 264, 280], [551, 265, 279]]);
chord(422, 253, 260, -1, 'red'); chord(449, 254, 261, -1, 'red'); chord(462, 253, 260, -1, 'red');
slur(421, 464, 260, 263);
dots(423, 585, 281);
group(418, 441, 5, 286, 296);
run(492, 548, 288, 298);
slur(492, 548, 288, 284);
slur(551, 575, 289, 284);
stems([[449, 289, 297], [473, 292, 301], [566, 290, 298], [573, 290, 298]]);

system(390, 592, 384, [[327, 't', 'Pno.', 17], [349, 'b', ''], [371, 't', 'Vln. II'], [393, 'b', 'Vla.'], [415, 'b', 'Vc.']], [469]);
bars([467, 561], 327, 357);
bars([467, 561], 371, 423);
chords([[418, 328, 338], [454, 327, 338], [482, 330, 342, 4], [533, 330, 342, 4], [568, 330, 336], [577, 331, 337], [582, 331, 337], [418, 347, 359, 1], [454, 347, 359, 1], [482, 348, 361], [533, 348, 360], [568, 350, 363, 3]]);
chord(419, 338, 346, -2, 'red'); chord(429, 338, 346, -2, 'red'); chord(567, 337, 348, -3, 'red');
dots(423, 468, 363);
run(482, 529, 416, 426);
slur(482, 530, 415, 412);
slur(532, 552, 416, 412);
stems([[417, 418, 427], [430, 417, 425], [443, 417, 425], [463, 415, 421], [545, 418, 427], [552, 418, 427], [567, 418, 427], [572, 416, 422], [581, 416, 422]]);
hairpin(584, 592, 430, '>');

layers.teal += 'M434 440h7v7h-7z';
text(435, 446, 'N');
system(390, 592, 384, [[453, 't', 'Pno.', 16], [475, 'b', ''], [497, 't', 'Vln. II'], [519, 'b', 'Vla.'], [541, 'b', 'Vc.']], [529, 587]);
bars([435, 527, 585], 453, 483);
bars([435, 527, 585], 497, 549);
chords([[411, 462, 474, -3, 'red'], [423, 462, 474, -3, 'red'], [411, 456, 462, 1], [423, 456, 462, 1], [443, 452, 464], [495, 453, 465], [537, 454, 468, 3], [411, 476, 489, 3], [423, 476, 489, 3], [443, 472, 485], [495, 471, 482], [538, 472, 482, 1], [460, 496, 508, 3], [505, 496, 507, -2], [544, 493, 504, -2], [555, 496, 508, -1], [566, 496, 508, -1]]);
chord(538, 460, 468, -2, 'red'); chord(554, 463, 469, -1, 'red');
text(441, 494, 'strings', 'micro'); text(456, 515, 'p');
hairpin(461, 496, 513, '<>'); hairpin(505, 530, 513, '<>'); hairpin(543, 554, 511, '<>'); hairpin(556, 575, 511, '<>');
run(441, 490, 540, 550);
run(494, 515, 542, 550);
slur(435, 492, 543, 536);
slur(494, 517, 541, 537);
h('red', 441, 534, 487);
stems([[411, 541, 548], [423, 541, 548], [430, 544, 551], [537, 543, 551], [554, 543, 551], [566, 543, 551], [577, 541, 548]]);
hairpin(407, 427, 555, '>');

/* page 3 */
system(655, 857, 649, [[245, 't', 'Pno.', 17], [267, 'b', ''], [289, 't', 'Vln. I'], [311, 't', 'Vln. II'], [334, 'b', 'Vla.'], [356, 'b', 'Vc.']], [770, 852]);
bars([768, 850], 245, 275);
bars([768, 850], 289, 364);
chords([[687, 244, 257, 3], [738, 246, 257, 3], [781, 246, 261, 1], [687, 265, 279], [738, 265, 278], [781, 265, 277, 1], [705, 311, 324, 3], [749, 314, 325, 4], [795, 309, 323], [823, 316, 325, 3], [837, 316, 325, 3]]);
chord(782, 256, 262, -2, 'red'); chord(811, 256, 264, -1, 'red');
text(828, 352, 'pizz.', 'micro', 'end');
hairpin(703, 735, 328, '<>'); hairpin(745, 770, 330, '<>'); hairpin(793, 813, 328, '<>'); hairpin(838, 848, 329, '<>');
run(687, 735, 355, 363);
run(738, 758, 357, 363);
slur(687, 735, 354, 350);
group(779, 801, 6, 353, 363);
run(811, 827, 357, 366);
stems([[836, 357, 364], [845, 358, 366]]);

system(655, 857, 649, [[393, 't', 'Pno.', 17], [415, 'b', ''], [437, 't', 'Vln. I'], [459, 't', 'Vln. II'], [482, 'b', 'Vla.'], [504, 'b', 'Vc.'], [526, 'b', 'D.B.']], [779, 852]);
bars([777, 850], 393, 423);
bars([777, 850], 437, 534);
chords([[688, 392, 405, 3], [744, 394, 405, 3], [790, 394, 401], [688, 413, 427], [744, 412, 426], [790, 416, 430, 3], [706, 458, 470], [756, 460, 471], [797, 465, 471], [808, 465, 472], [833, 465, 472]]);
chord(792, 403, 411, -1, 'red'); chord(807, 403, 410, -2, 'red');
run(687, 740, 503, 512);
run(744, 765, 505, 511);
slur(687, 740, 502, 498);
stems([[789, 507, 514], [807, 505, 514], [813, 505, 513], [825, 505, 512], [833, 505, 513], [844, 503, 510]]);
h('ink', 807, 514, 825);

/* pages 4 and 5 share the full orchestra layout */
const orchestra = [
  [235, 't', 'Fl.'], [257, 't', 'Ob.'], [279, 't', 'B♭ Cl.'], [301, 'b', 'Bsn.'],
  [323, 't', 'Hn.'], [346, 't', 'B♭ Tpt.'], [368, 'b', 'Tbn.'],
  [412, 'p', 'Acc.'], [434, 't', 'Pno.', 17], [456, 'b', ''],
  [478, 't', 'Vln. I'], [500, 't', 'Vln. II'], [522, 'b', 'Vla.'], [545, 'b', 'Vc.'], [567, 'b', 'D.B.']
];
[[918, 1150, 911, [1024, 1052, 1087, 1143]], [1183, 1415, 1176, [1293, 1331]]].forEach(([x, x2, lx, xs]) => {
  system(x, x2, lx, orchestra, x === 918 ? [1145] : [1295, 1333]);
  dash(x2, 206, x2, 216);
  [[235, 309], [323, 376], [412, 420], [434, 464], [478, 575]].forEach(([a, b]) => bars(xs, a, b));
  h('ink', x, 394, x2);
  v('ink', x + 19, 390, 397);
  xs.forEach(b => v('ink', b, 390, 398));
  text(x - 11, 396, 'B.D.', 'tiny', 'end');
  dash(x - 2, 206, x - 2, 637);
});
layers.teal += 'M1085 222h7v7h-7z';
text(1087, 228, 'S');
chords([[1097, 301, 312, 1], [1112, 299, 309, 1], [1103, 321, 331, 1], [1123, 324, 336, 3], [1097, 368, 378, 1], [1112, 366, 375, 1],
  [950, 437, 448, 3], [1001, 437, 448, 3], [1031, 437, 443, 1], [1044, 437, 443, 1], [1057, 437, 443, 1], [1097, 431, 445, 4], [1112, 432, 446, 4],
  [950, 455, 468, 2], [1001, 454, 467, 2], [1031, 457, 470, 3], [1058, 457, 470, 3], [1097, 453, 466, 1], [1112, 451, 464, 2],
  [967, 503, 515, 4], [1009, 503, 515, 3], [1044, 504, 517, 4], [1057, 504, 517, 4], [1072, 504, 517, 4], [1103, 498, 511, 2], [1123, 503, 516, 3],
  [1031, 444, 455, -3, 'red'], [1057, 444, 455, -3, 'red'], [1103, 570, 577, 1], [1123, 568, 574, 1], [1115, 542, 547, 0]]);
[[967, 516], [1009, 516], [1044, 518], [1057, 518], [1072, 518], [1123, 517], [1103, 578], [1097, 379]].forEach(([x, y]) => h('gold', x - 1, y, x + 2));
slur(1034, 1056, 450, 453);
for (let x = 1111; x < 1143; x += 3) v('ink', x, 481, 490);
h('ink', 1111, 489, 1141); h('ink', 1111, 490, 1141);
run(950, 998, 545, 555);
h('red', 950, 538, 1000);
slur(950, 998, 544, 541);
slur(1001, 1017, 545, 542);
stems([[1010, 547, 555], [1017, 549, 556], [1031, 546, 556], [1043, 544, 553], [1057, 544, 552], [1065, 543, 551], [1071, 543, 551], [1101, 478, 487], [1081, 501, 507]]);
h('ink', 1001, 555, 1017);

chords([[1216, 433, 443], [1230, 434, 445], [1242, 434, 446, 3], [1251, 436, 446], [1305, 431, 445], [1320, 433, 445],
  [1268, 429, 444, -3], [1276, 429, 444, -3], [1284, 430, 444, -3], [1216, 454, 467, 1], [1230, 454, 467, 1], [1242, 453, 466, 1], [1251, 454, 466, 1],
  [1268, 456, 466, -1], [1276, 455, 465, -1], [1284, 454, 465, -1], [1305, 454, 466], [1320, 451, 464],
  [1230, 501, 513, 3], [1251, 503, 515, 3], [1305, 501, 513, 3], [1320, 501, 515, 3], [1305, 545, 554], [1320, 541, 552, 1],
  [1215, 538, 545, 1], [1230, 538, 544, 0], [1242, 537, 544, 1], [1251, 538, 544, 1]]);
layers.ink += 'M1216 433L1242 434M1216 454L1242 453M1268 444H1284M1268 466L1284 465M1215 538L1242 537M1215 572V580L1242 578V571M1230 572V579M1250 571V577M1305 571V577M1318 569V575';
layers.red += 'M1215 548V557L1242 556V547M1228 548V556M1250 547V555M1268 553V556';
run(1216, 1242, 478, 484);
stems([[1251, 480, 486]]);
slurs += 'M1307 515Q1320 519 1343 518';
// fermatas
[[781, 241], [1285, 426], [1270, 476], [1283, 474], [1270, 498], [1270, 536], [1270, 563]].forEach(([x, y]) => {
  layers.ink += `M${x - 2} ${y + 1}v1M${x - 1} ${y}h3M${x + 2} ${y + 1}v1`;
});

/* system numbers */
[[1, 76, 262], [2, 76, 344], [3, 76, 448], [4, 76, 552], [5, 359, 262], [6, 359, 366], [7, 359, 492], [8, 624, 295], [9, 624, 454], [10, 907, 396], [11, 1172, 396]]
  .forEach(([n, x, y]) => text(x, y, n, 'number'));

/* drag handles */
[[105, 200], [323, 200], [74, 216], [107, 216], [339, 216], [107, 298], [308, 298], [107, 379], [308, 379], [107, 505], [308, 505], [308, 587],
 [74, 621], [339, 621], [105, 637], [323, 637],
 [388, 200], [607, 200], [357, 216], [390, 216], [622, 216, 1], [390, 298], [592, 298], [390, 423], [592, 423], [592, 549],
 [357, 621], [622, 621, 1], [388, 637], [607, 637],
 [653, 200], [872, 200], [655, 216], [887, 216], [655, 364], [856, 364], [856, 534], [887, 621], [653, 637], [872, 637],
 [916, 200], [905, 206], [918, 206], [1165, 200], [1170, 206, 1], [1181, 200], [1183, 206], [1150, 575],
 [905, 631], [916, 637], [1165, 637], [1170, 631, 1], [1181, 637]].forEach(a => handle(...a));

/* orange marker strokes, sprayed around each polyline */
function spray(points, width) {
  let d = '';
  for (let i = 1; i < points.length; i++) {
    const [ax, ay] = points[i - 1], [bx, by] = points[i];
    const n = Math.round(Math.hypot(bx - ax, by - ay) * 4);
    for (let k = 0; k < n; k++) {
      const t = k / n, a = rnd() * 6.28, r = Math.sqrt(rnd()) * width;
      const x = Math.round(ax + (bx - ax) * t + Math.cos(a) * r);
      const y = Math.round(ay + (by - ay) * t + Math.sin(a) * r);
      d += `M${x} ${y}h${rnd() < .4 ? 2 : 1}v${rnd() < .4 ? 2 : 1}h-1z`;
      if (rnd() < .3) d += `M${x} ${y}h2v2h-2z`;
    }
  }
  return d;
}
const strokes = [
  [[[319, 242], [318, 262], [313, 283], [307, 300]], 4],
  [[[312, 281], [335, 269], [360, 254], [385, 240], [405, 228]], 4],
  [[[306, 300], [325, 308], [349, 317]], 4],
  [[[326, 426], [322, 440], [316, 450]], 4],
  [[[316, 450], [345, 433], [370, 419], [395, 408]], 4],
  [[[314, 456], [310, 469], [322, 480], [335, 488], [351, 493]], 4]
].map(s => spray(...s)).join('');
const blobs = [[319, 243, 4], [313, 283, 4], [307, 300, 4], [405, 228, 4], [349, 317, 4], [325, 426, 4], [316, 450, 4], [310, 469, 5], [395, 408, 4], [350, 493, 4]]
  .map(([x, y, r]) => `<circle cx="${x}" cy="${y}" r="${r}"/>`).join('');

const paths = Object.keys(layers).map(l => `<path class="crisp ${l}" d="${layers[l]}"/>`).join('');

// integer coordinates fall on pixel centres
document.getElementById('canvas').innerHTML = `
<svg width="1400" height="500">
  <defs>
    <linearGradient id="knob" x2="1" y2="1">
      <stop offset="0" stop-color="#777" stop-opacity=".8"/>
      <stop offset=".6" stop-color="#eee" stop-opacity=".6"/>
      <stop offset="1" stop-color="#fff" stop-opacity=".7"/>
    </linearGradient>
    <filter id="grain" x="0" y="0" width="1" height="1">
      <feTurbulence type="fractalNoise" baseFrequency=".08 .25" numOctaves="2"/>
      <feColorMatrix values="0 0 0 0 .7  0 0 0 0 .7  0 0 0 0 .55  1.5 0 0 0 -.4"/>
    </filter>
  </defs>
  <g transform="translate(-43.500 -169.500)">
    ${pages}
    ${paths}
    <path class="crisp margin" d="${margins}"/>
    <path class="slur" d="${slurs}"/>
    ${texts}
    ${handles}
    <path class="marker-line" d="M308 261L330 241L355 233L363 227H380L390 223"/>
    <g class="marker"><path d="${strokes}"/>${blobs}</g>
  </g>
</svg>`;
```
